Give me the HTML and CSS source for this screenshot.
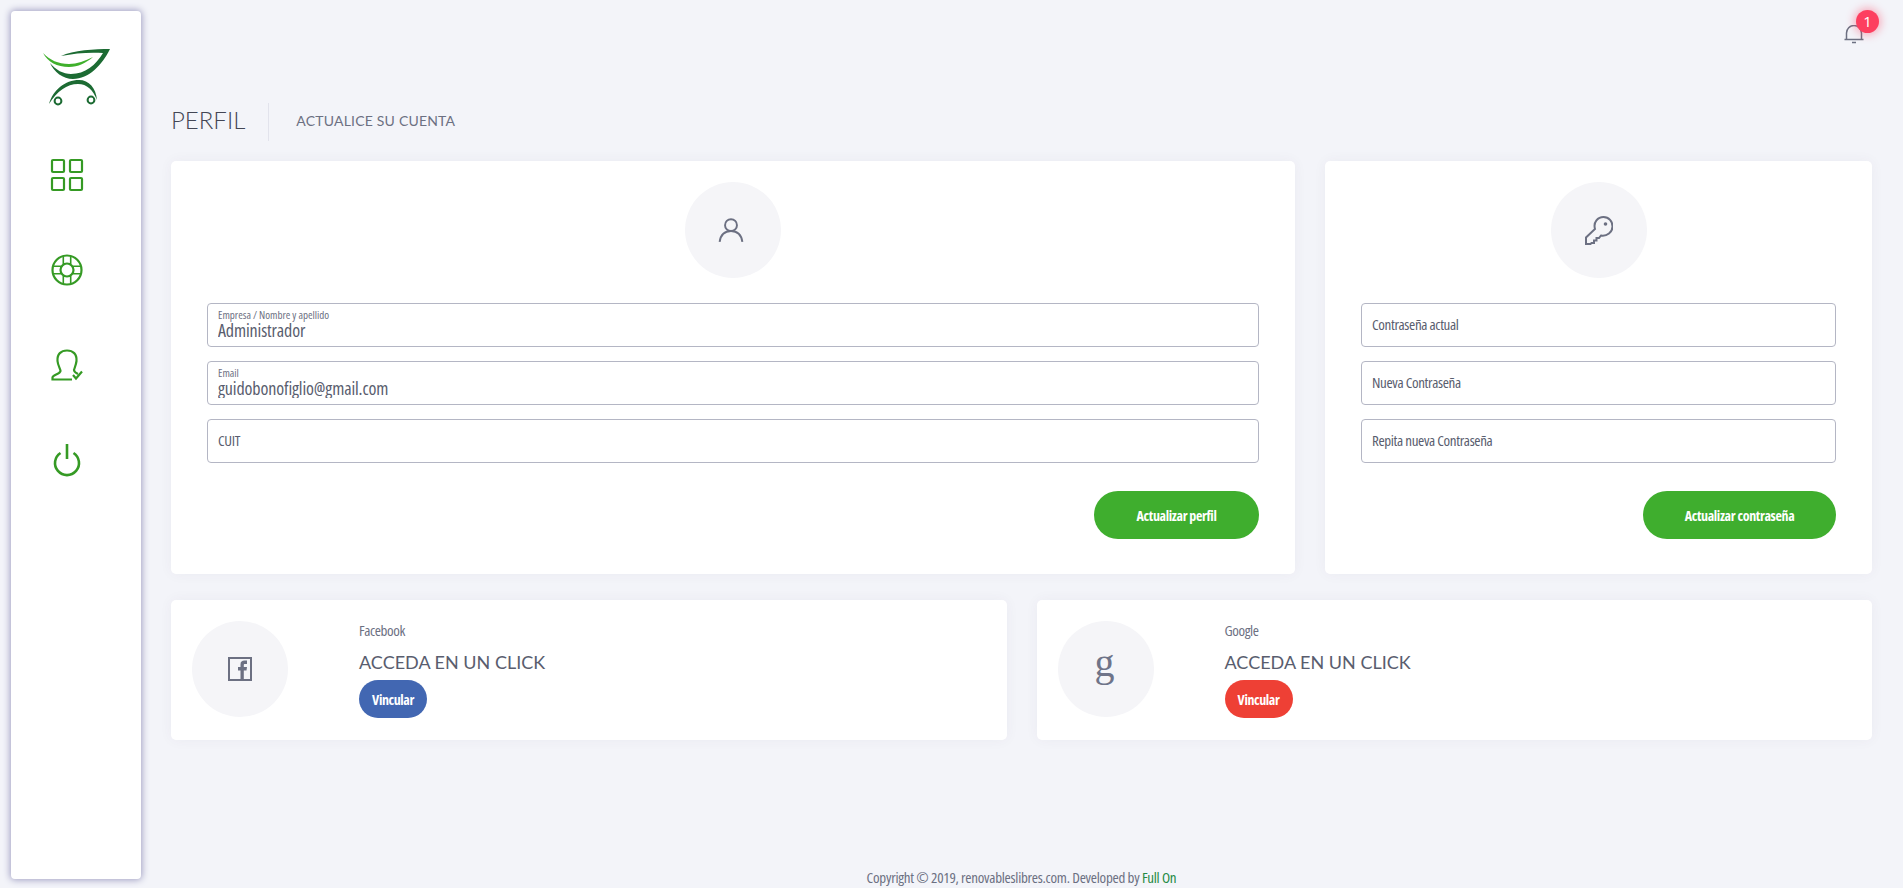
FILE: index.html
```html
<!DOCTYPE html>
<html lang="es">
<head>
<meta charset="utf-8">
<title>Perfil</title>
<link rel="stylesheet" href="styles.css">
</head>
<body>
<div class="page">
  <aside class="sidebar">
    <svg class="logo" viewBox="0 0 68 58" width="68" height="58">
      <path class="logo-dark" d="M67 1C52 1 30 2 18 8C32 5 48 4 60 5C53 17 42 26 28 26C20 26 13 22 7 15C11 24 20 31 30 31C46 31 59 17 67 1Z"/>
      <path class="logo-light" d="M0 5C5 14 14 19 26 19C35 19 43 15 50 9C42 13 34 16 26 16C15 16 7 12 0 5Z"/>
      <path class="logo-dark" d="M6 56C10 42 22 32 36 32C46 32 53 40 54 52C50 42 44 36 35 36C24 36 14 43 6 56Z"/>
      <circle class="logo-wheel" cx="15" cy="53" r="3.4"/>
      <circle class="logo-wheel" cx="48" cy="52" r="3.4"/>
    </svg>
    <nav class="nav">
      <a class="nav-item" href="#"><svg class="nav-icon" viewBox="0 0 32 32"><rect x="1" y="1" width="12" height="12" rx="1"/><rect x="19" y="1" width="12" height="12" rx="1"/><rect x="1" y="19" width="12" height="12" rx="1"/><rect x="19" y="19" width="12" height="12" rx="1"/></svg></a>
      <a class="nav-item" href="#"><svg class="nav-icon" viewBox="0 0 32 32"><circle cx="16" cy="16" r="14.500"/><circle cx="16" cy="16" r="6.500"/><path class="spokes" d="M12.300 2v8.500M19.700 2v8.500M12.300 21.500v8.500M19.700 21.500v8.500M2 12.300h8.500M2 19.700h8.500M21.500 12.300h8.500M21.500 19.700h8.500"/></svg></a>
      <a class="nav-item" href="#"><svg class="nav-icon" viewBox="0 0 32 32"><path d="M21 30.500H1.500V28.500C1.500 26 9 25 9.500 22C9.500 20 7 17 6.500 12C6 5 10 1.500 16 1.500C22 1.500 26 5 25.500 12C25 16 23.500 19 23 21C23 23 25 24 27 25"/><path d="M22 26l3 3.500l6-7"/></svg></a>
      <a class="nav-item" href="#"><svg class="nav-icon nav-icon-power" viewBox="0 0 32 32"><path d="M9.500 9A12 12 0 1 0 22.500 9"/><path d="M16 0v15"/></svg></a>
    </nav>
  </aside>

  <div class="main">
    <header class="topbar">
      <div class="bell">
        <svg class="bell-icon" viewBox="0 0 20 20"><path d="M.5 14.500h19M2.500 14.500V8a7.500 7.500 0 0 1 15 0v6.500M8 17.500h4"/></svg>
        <span class="badge">1</span>
      </div>
    </header>

    <div class="title-row">
      <h1 class="title">PERFIL</h1>
      <span class="subtitle">ACTUALICE SU CUENTA</span>
    </div>

    <section class="row row-forms">
      <form class="card form-card">
        <div class="avatar">
          <svg class="avatar-icon" viewBox="0 0 24 24"><circle cx="12" cy="7.500" r="5.500"/><path d="M1.500 23C2.500 16.500 6.500 13 12 13C17.500 13 21.500 16.500 22.500 23"/></svg>
        </div>
        <label class="field"><span class="field-label">Empresa / Nombre y apellido</span><input class="field-input" type="text" value="Administrador"></label>
        <label class="field"><span class="field-label">Email</span><input class="field-input" type="text" value="guidobonofiglio@gmail.com"></label>
        <input class="field plain" type="text" placeholder="CUIT">
        <div class="actions"><button class="btn btn-primary btn-profile" type="button">Actualizar perfil</button></div>
      </form>
      <form class="card form-card">
        <div class="avatar">
          <svg class="avatar-icon key-icon" viewBox="0 0 28 29"><path d="M1 28V21.500L10 13C8 6 13 1 18.500 1C24 1 27.500 5.500 27.500 10.500C27.500 16 22 20.500 16 19.500L14 22H11.500V24.500H9V27H6.500L5.500 28Z"/><circle class="dot" cx="20.500" cy="8" r="1.800"/></svg>
        </div>
        <input class="field plain" type="password" placeholder="Contraseña actual">
        <input class="field plain" type="password" placeholder="Nueva Contraseña">
        <input class="field plain" type="password" placeholder="Repita nueva Contraseña">
        <div class="actions"><button class="btn btn-primary btn-password" type="button">Actualizar contraseña</button></div>
      </form>
    </section>

    <section class="row row-social">
      <div class="card social-card">
        <div class="avatar social-avatar">
          <svg class="fb-icon" viewBox="0 0 24 24"><path class="fb-box" d="M1 1h22v22H1z"/><path class="fb-f" d="M12.500 23V13.500H10V10h2.500V7.500C12.500 4.500 14 3.500 16.500 3.500H19V7H17C16 7 15.800 7.500 15.800 8.300V10H19L18.500 13.500H15.800V23Z"/></svg>
        </div>
        <div class="social-body">
          <div class="social-name">Facebook</div>
          <div class="social-title">ACCEDA EN UN CLICK</div>
          <button class="btn btn-small btn-fb" type="button">Vincular</button>
        </div>
      </div>
      <div class="card social-card">
        <div class="avatar social-avatar"><span class="g-glyph">g</span></div>
        <div class="social-body">
          <div class="social-name">Google</div>
          <div class="social-title">ACCEDA EN UN CLICK</div>
          <button class="btn btn-small btn-google" type="button">Vincular</button>
        </div>
      </div>
    </section>

    <footer class="footer">Copyright © 2019, renovableslibres.com. Developed by <a class="footer-link" href="#">Full On</a></footer>
  </div>
</div>
</body>
</html>
```
FILE: styles.css
```css
* { box-sizing: border-box; }
html, body { margin: 0; height: 100%; }
body {
  background: #f3f4f9;
  color: #595d6e;
  font-family: "Open Sans", sans-serif;
  font-stretch: 75%;
  overflow: hidden;
}
.page { display: flex; height: 888px; padding: 11px 31px 0 11px; }

.sidebar {
  width: 130px;
  height: 868px;
  flex: none;
  background: #fff;
  border-radius: 4px;
  box-shadow: 0 0 7px 1px #9f9ec2;
  display: flex;
  flex-direction: column;
  padding: 37px 0 0 32px;
}
.logo { display: block; }
.logo-dark { fill: #1c6b33; }
.logo-light { fill: #3fb02c; }
.logo-wheel { fill: none; stroke: #1c6b33; stroke-width: 2; }
.nav { display: flex; flex-direction: column; gap: 63px; margin: 53px 0 0 8px; }
.nav-item { display: block; width: 32px; height: 32px; }
.nav-icon { display: block; width: 32px; height: 32px; fill: none; stroke: #359a24; stroke-width: 2.200; overflow: visible; }
.nav-icon-power { stroke-width: 2.600; }
.spokes { stroke-width: 1.600; }

.main { flex: 1; min-width: 0; margin-left: 30px; display: flex; flex-direction: column; height: 874px; }
.topbar { display: flex; justify-content: flex-end; height: 92px; flex: none; }
.bell { position: relative; width: 18px; height: 20px; margin: 14px 10px 0 0; }
.bell-icon { display: block; width: 20px; height: 20px; fill: none; stroke: #6c7082; stroke-width: 1.500; }
.badge {
  position: absolute;
  left: 12px;
  top: -15px;
  width: 23px;
  height: 23px;
  border-radius: 50%;
  background: #fd3f5f;
  box-shadow: 0 0 8px 2px rgba(253, 63, 95, .4);
  color: #fff;
  font: 15px/23px "Open Sans", sans-serif;
  text-align: center;
}

.title-row { display: flex; align-items: center; height: 38px; flex: none; margin-bottom: 20px; }
.title {
  margin: 0;
  padding-right: 23px;
  height: 38px;
  border-right: 1px solid #e2e3ec;
  font: 300 24px/34px Lato, sans-serif;
  color: #434655;
}
.subtitle { margin-left: 27px; font: 400 14px Lato, sans-serif; letter-spacing: .2px; color: #6c7082; position: relative; top: -2px; }

.row { display: flex; gap: 30px; flex: none; }
.card { background: #fff; border-radius: 5px; box-shadow: 0 0 13px rgba(82, 63, 105, .05); }
.row-forms { height: 413px; margin-bottom: 26px; }
.form-card { padding: 21px 36px 0; display: flex; flex-direction: column; }
.form-card:first-child { width: 1124px; }
.form-card:last-child { flex: 1; }

.avatar {
  width: 96px;
  height: 96px;
  border-radius: 50%;
  background: #f5f5f8;
  display: flex;
  align-items: center;
  justify-content: center;
  align-self: center;
  flex: none;
  margin-bottom: 25px;
}
.avatar-icon { width: 26px; height: 26px; fill: none; stroke: #6c7082; stroke-width: 1.800; margin-right: 4px; }
.key-icon { width: 28px; height: 29px; stroke-width: 2; margin: 0; }
.dot { fill: #6c7082; stroke: none; }

.field {
  display: flex;
  flex-direction: column;
  justify-content: center;
  flex: none;
  width: 100%;
  height: 44px;
  margin-bottom: 14px;
  padding: 0 10px 2px;
  background: #fff;
  border: 1px solid #b4b6c4;
  border-radius: 4px;
}
.plain { font: 15px "Open Sans", sans-serif; font-stretch: 75%; letter-spacing: -.35px; color: #595d6e; outline: none; }
.plain::placeholder { color: #595d6e; opacity: 1; }
.field-label { font-size: 11px; line-height: 11px; margin-bottom: 1px; color: #6c7082; }
.field-input {
  border: 0;
  padding: 0;
  outline: none;
  background: none;
  font: 18px/19px "Open Sans", sans-serif;
  font-stretch: 75%;
  letter-spacing: -.12px;
  color: #595d6e;
  height: 19px;
}
.actions { display: flex; justify-content: flex-end; margin-top: 14px; }

.btn { border: 0; color: #fff; font-family: "Open Sans", sans-serif; font-stretch: 75%; font-weight: 700; border-radius: 24px; padding: 0; }
.btn-primary { height: 48px; font-size: 14px; letter-spacing: -.35px; background: #3fae2e; }
.btn-profile { width: 165px; }
.btn-password { width: 193px; }
.btn-small { width: 68px; height: 38px; font-size: 14px; letter-spacing: -.4px; display: block; }
.btn-fb { background: #4267b2; }
.btn-google { background: #ee4035; }

.row-social { height: 140px; }
.social-card { flex: 1; display: flex; align-items: center; padding: 0 0 2px 21px; }
.social-avatar { margin: 0 71px 0 0; align-self: center; }
.fb-icon { width: 24px; height: 24px; }
.fb-box { fill: none; stroke: #6c7082; stroke-width: 2; }
.fb-f { fill: #6c7082; }
.g-glyph { font: 40px/1 "Liberation Serif", serif; color: #6f7489; position: relative; top: -6px; left: -1px; }
.social-body { display: flex; flex-direction: column; align-items: flex-start; padding-top: 2px; }
.social-name { font-size: 15px; letter-spacing: -.4px; line-height: 16px; color: #6c7082; }
.social-title { font: 400 18px/22px Lato, sans-serif; color: #595d6e; margin: 13px 0 7px; }

.footer { margin-top: auto; text-align: center; font-size: 15px; letter-spacing: -.26px; line-height: 16px; color: #6c7082; }
.footer-link { color: #248a44; text-decoration: none; }
```
